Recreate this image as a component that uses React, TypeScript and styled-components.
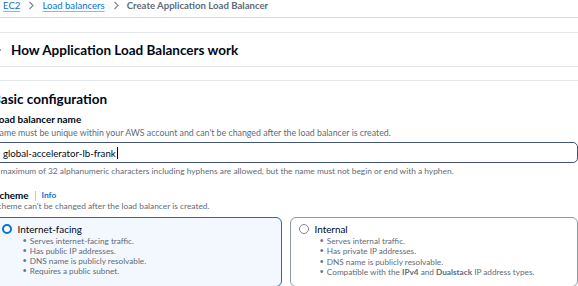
import * as React from 'react'
import styled, { createGlobalStyle } from 'styled-components'

const GlobalStyle = createGlobalStyle`
  html, body {
    margin: 0;
    padding: 0;
    background: #ffffff;
  }
  body {
    font-family: Lato, "Open Sans", sans-serif;
    color: #000716;
  }
`

const Page = styled.div`
  width: 578px;
  height: 286px;
  overflow: hidden;
  background: #ffffff;
`

const Breadcrumbs = styled.nav`
  display: flex;
  align-items: flex-start;
  gap: 7px;
  box-sizing: border-box;
  height: 18px;
  padding: 0 0 0 3px;
  border-bottom: 1px solid #d5d9dd;
  font-size: 9.6px;
  line-height: 11px;
`

const Crumb = styled.a`
  color: #0972d3;
  text-decoration: underline;
  text-decoration-color: #8fb8e6;
  text-underline-offset: 1.5px;
`

const Current = styled.span`
  color: #5f6b7a;
  font-weight: 700;
`

const Chevron = styled.svg`
  width: 8px;
  height: 11px;
  flex: none;
`

const Main = styled.main`
  margin-left: -7px;
  width: 585px;
`

const Panel = styled.section<{ $top: number }>`
  margin-top: ${p => p.$top}px;
  border-top: 1px solid #e4e7ea;
`

const ExpandHeader = styled.div`
  display: flex;
  align-items: center;
  gap: 9px;
  height: 33px;
  border-bottom: 1px solid #e4e7ea;
  padding-left: 3px;
`

const Caret = styled.svg`
  width: 6px;
  height: 8px;
  flex: none;
`

const H2 = styled.h2`
  margin: 0;
  font-size: 13.5px;
  line-height: 16px;
  font-weight: 700;
  color: #000716;
`

const Body = styled.div`
  padding-top: 10px;
`

const H3 = styled.h3`
  margin: 0 0 7px -1px;
  font-size: 13.5px;
  line-height: 16px;
  font-weight: 700;
`

const Label = styled.div`
  display: flex;
  align-items: center;
  gap: 6px;
  margin-left: 1px;
  font-size: 9.9px;
  line-height: 11px;
  font-weight: 700;
`

const Sep = styled.span`
  width: 1px;
  height: 10px;
  background: #c6c6cd;
`

const InfoLink = styled.a`
  color: #0972d3;
  font-size: 8.3px;
  font-weight: 700;
`

const Hint = styled.div<{ $size?: number; $mt?: number; $mb?: number }>`
  font-size: ${p => p.$size ?? 8.4}px;
  line-height: 11px;
  color: #5f6b7a;
  margin-top: ${p => p.$mt ?? 0}px;
  margin-bottom: ${p => p.$mb ?? 0}px;
`

const Input = styled.div`
  display: flex;
  align-items: center;
  box-sizing: border-box;
  height: 21px;
  margin: 4px 0 0 0;
  padding-left: 9px;
  border: 1.5px solid #44557a;
  border-radius: 5px;
  font-size: 9.7px;
`

const Cursor = styled.span`
  display: inline-block;
  width: 1px;
  height: 12px;
  background: #000716;
  margin-left: 1px;
`

const Tiles = styled.div`
  display: grid;
  grid-template-columns: 1fr 1fr;
  gap: 8px;
  margin-top: 5px;
`

const Tile = styled.div<{ $selected?: boolean }>`
  box-sizing: border-box;
  height: 70px;
  padding: ${p => (p.$selected ? '3.5px 7px 0 7.5px' : '4px 7px 0 8px')};
  border: ${p => (p.$selected ? '1.5px solid #0972d3' : '1px solid #8d99a8')};
  border-radius: 6px;
  background: ${p => (p.$selected ? '#f2f8fd' : '#ffffff')};
`

const TileHead = styled.div`
  display: flex;
  align-items: center;
  gap: 6px;
  font-size: 9.9px;
  line-height: 14px;
`

const Radio = styled.span<{ $checked?: boolean }>`
  box-sizing: border-box;
  width: 10px;
  height: 10px;
  border-radius: 50%;
  flex: none;
  background: #ffffff;
  border: ${p => (p.$checked ? '2.8px solid #0972d3' : '1px solid #7d8998')};
`

const Bullets = styled.ul`
  margin: 0;
  padding-left: 21px;
  list-style: none;
  font-size: 8.2px;
  line-height: 10.3px;
  color: #5f6b7a;
`

const Item = styled.li`
  display: flex;
  gap: 3px;
  white-space: pre;
  &::before {
    content: '•';
    color: #687482;
    font-size: 7.5px;
  }
`

const ChevronIcon = () => (
  <Chevron viewBox="0 0 8 11">
    <path d="M2.5 2l3.5 3.5-3.5 3.5" fill="none" stroke="#7d8998" strokeWidth="1.2" />
  </Chevron>
)

export default function App() {
  return (
    <Page>
      <GlobalStyle />
      <Breadcrumbs>
        <Crumb>EC2</Crumb>
        <ChevronIcon />
        <Crumb>Load balancers</Crumb>
        <ChevronIcon />
        <Current>Create Application Load Balancer</Current>
      </Breadcrumbs>
      <Main>
        <Panel $top={14}>
          <ExpandHeader>
            <Caret viewBox="0 0 6 8">
              <path d="M0 0l5 4-5 4z" fill="#000716" />
            </Caret>
            <H2>How Application Load Balancers work</H2>
          </ExpandHeader>
        </Panel>
        <Panel $top={13}>
          <Body>
            <H3>Basic configuration</H3>
            <Label>Load balancer name</Label>
            <Hint $size={8.8} $mt={2}>
              Name must be unique within your AWS account and can't be changed after the load balancer is created.
            </Hint>
            <Input>
              global-accelerator-lb-frank
              <Cursor />
            </Input>
            <Hint $mt={3} $mb={13}>
              A maximum of 32 alphanumeric characters including hyphens are allowed, but the name must not begin or end with a hyphen.
            </Hint>
            <Label>
              Scheme
              <Sep />
              <InfoLink>Info</InfoLink>
            </Label>
            <Hint>Scheme can't be changed after the load balancer is created.</Hint>
            <Tiles>
              <Tile $selected>
                <TileHead>
                  <Radio $checked />
                  Internet-facing
                </TileHead>
                <Bullets>
                  <Item>Serves internet-facing traffic.</Item>
                  <Item>Has public IP addresses.</Item>
                  <Item>DNS name is publicly resolvable.</Item>
                  <Item>Requires a public subnet.</Item>
                </Bullets>
              </Tile>
              <Tile>
                <TileHead>
                  <Radio />
                  Internal
                </TileHead>
                <Bullets>
                  <Item>Serves internal traffic.</Item>
                  <Item>Has private IP addresses.</Item>
                  <Item>DNS name is publicly resolvable.</Item>
                  <Item>
                    <span>
                      Compatible with the <b>IPv4</b> and <b>Dualstack</b> IP address types.
                    </span>
                  </Item>
                </Bullets>
              </Tile>
            </Tiles>
          </Body>
        </Panel>
      </Main>
    </Page>
  )
}
